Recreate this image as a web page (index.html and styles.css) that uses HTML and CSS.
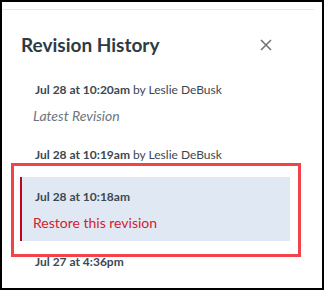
FILE: index.html
```html
<!DOCTYPE html>
<html lang="en">
<head>
  <meta charset="UTF-8">
  <meta name="viewport" content="width=device-width, initial-scale=1.0">
  <link rel="stylesheet" href="styles.css">
  <title>Revision History</title>
</head>
<body>
  <div class="frame">
    <div class="tray">
      <header class="tray-header">
        <h2>Revision History</h2>
        <button class="close" aria-label="Close">
          <svg width="12" height="12" viewBox="0 0 12 12">
            <path d="M1 1 L11 11 M11 1 L1 11" stroke="#6b7177" stroke-width="1.5" fill="none"/>
          </svg>
        </button>
      </header>
      <ul class="rev-list">
        <li class="rev">
          <div class="rev-date"><b>Jul 28 at 10:20am</b> by Leslie DeBusk</div>
          <div class="rev-note latest">Latest Revision</div>
        </li>
        <li class="rev">
          <div class="rev-date"><b>Jul 28 at 10:19am</b> by Leslie DeBusk</div>
        </li>
        <li class="rev selected">
          <div class="rev-date"><b>Jul 28 at 10:18am</b></div>
          <div class="rev-note restore">Restore this revision</div>
        </li>
        <li class="rev">
          <div class="rev-date"><b>Jul 27 at 4:36pm</b></div>
        </li>
      </ul>
    </div>
    <!-- annotation box drawn over the selected revision -->
    <div class="callout"></div>
  </div>
</body>
</html>
```

FILE: styles.css
```css
/* Reset default margin and padding */
body, h2, ul, li {
  margin: 0;
  padding: 0;
}

body {
  font-family: Lato, "Open Sans", Arial, sans-serif;
  color: #2d3b45;
}

.frame {
  position: relative;
  width: 324px;
  height: 290px;
  box-sizing: border-box;
  border: 2px solid #000;
  background: #fff;
  overflow: hidden;
}

.tray {
  margin: 7px 8px 0 0;
  border-top: 1px solid #e6e8ea;
}

.tray-header {
  display: flex;
  justify-content: space-between;
  align-items: center;
  padding: 23px 42px 0 19px;
}

.tray-header h2 {
  font-size: 19px;
  font-weight: 700;
  line-height: 24px;
}

.close {
  display: flex;
  padding: 0;
  border: none;
  background: none;
  cursor: pointer;
}

.rev-list {
  list-style: none;
  margin-top: 13px;
}

.rev {
  margin: 0 24px 0 18px;
  padding: 12px 0 14px 13px;
  border-left: 2px solid transparent;
}

.rev:last-child {
  padding-top: 13px;
}

.rev-date {
  font-size: 12px;
  line-height: 16px;
  color: #3b4852;
}

.rev-date b {
  font-weight: 700;
}

.rev-note {
  font-size: 14px;
  line-height: 16px;
  margin-top: 10px;
  margin-left: -2px;
}

.latest {
  font-style: italic;
  color: #6b7780;
  margin-bottom: -3px;
}

.selected {
  background: #e0e9f3;
  border-left-color: #c8001e;
  padding-bottom: 10px;
}

.restore {
  color: #d0212e;
}

.callout {
  position: absolute;
  left: 9px;
  top: 161px;
  width: 284px;
  height: 88px;
  border: 3px solid #f2434b;
}
```
